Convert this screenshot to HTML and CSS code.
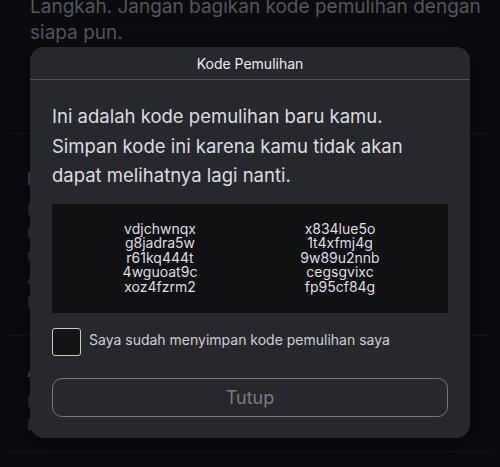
FILE: index.html
```html
<!DOCTYPE html>
<html lang="id">
<head>
<meta charset="utf-8">
<title>Kode Pemulihan</title>
<link rel="stylesheet" href="styles.css">
</head>
<body>
<div class="page">
  <p class="bg-text bg-top">Langkah. Jangan bagikan kode pemulihan dengan<br>siapa pun.</p>
  <div class="bg-divider"></div>
  <section class="bg-section s1">
    <h3 class="bg-head">Pemulihan Akun</h3>
    <p class="bg-small">Hasilkan kode pemulihan baru untuk akun kamu.<br>Kode lama tidak akan berlaku lagi setelah<br>membuat kode baru.<br>Aktifkan verifikasi dua langkah terlebih dahulu.<br>Perbarui kode kapan saja.</p>
  </section>
  <div class="bg-divider"></div>
  <section class="bg-section s2">
    <h3 class="bg-head">Aplikasi</h3>
    <p class="bg-small">Pengaturan aplikasi autentikator<br>Email dan perangkat tepercaya</p>
  </section>
  <div class="bg-divider"></div>
</div>

<div class="modal" role="dialog" aria-labelledby="modal-title">
  <header class="modal-header">
    <h2 id="modal-title" class="modal-title">Kode Pemulihan</h2>
  </header>
  <div class="modal-body">
    <p class="intro">Ini adalah kode pemulihan baru kamu. Simpan kode ini karena kamu tidak akan dapat melihatnya lagi nanti.</p>
    <div class="codes">
      <div class="code-col">
        <span>vdjchwnqx</span>
        <span>g8jadra5w</span>
        <span>r61kq444t</span>
        <span>4wguoat9c</span>
        <span>xoz4fzrm2</span>
      </div>
      <div class="code-col">
        <span>x834lue5o</span>
        <span>1t4xfmj4g</span>
        <span>9w89u2nnb</span>
        <span>cegsgvixc</span>
        <span>fp95cf84g</span>
      </div>
    </div>
    <label class="confirm">
      <span class="checkbox"></span>
      <span class="confirm-text">Saya sudah menyimpan kode pemulihan saya</span>
    </label>
    <button class="close-btn" type="button">Tutup</button>
  </div>
</div>
</body>
</html>
```

FILE: styles.css
```css
* { box-sizing: border-box; }

html, body {
  margin: 0;
  padding: 0;
  background: #0b0b0f;
  width: 500px;
  height: 467px;
  overflow: hidden;
  font-family: "Inter", "Noto Sans", "Liberation Sans", sans-serif;
}

.page {
  padding: 0 10px;
}

.bg-text {
  margin: 0;
  color: #55565c;
  font-size: 19px;
  line-height: 26px;
  white-space: nowrap;
}

.bg-top {
  padding: 0 20px;
  margin-top: -6px;
  height: 139px;
}

.bg-divider {
  height: 1px;
  background: #18181c;
}

.bg-section {
  padding: 0 17px;
}

.s1 { height: 201px; padding-top: 34px; }
.s2 { height: 115px; padding-top: 24px; }

.bg-head {
  margin: 0;
  color: #4a4b50;
  font-size: 18px;
  line-height: 22px;
  font-weight: 700;
}

.bg-small {
  margin: 8px 0 0;
  color: #3c3d42;
  font-size: 15px;
  line-height: 23px;
}

.modal {
  position: absolute;
  left: 30px;
  top: 47px;
  width: 440px;
  background: #27282d;
  border-radius: 14px;
  box-shadow: 0 4px 18px rgba(0, 0, 0, 0.5);
}

.modal-header {
  height: 33px;
  border-bottom: 1px solid #505156;
  display: flex;
  align-items: center;
  justify-content: center;
}

.modal-title {
  margin: 0;
  font-size: 14px;
  font-weight: 400;
  color: #ececef;
}

.modal-body {
  padding: 22px 22px 21px;
  display: flex;
  flex-direction: column;
}

.intro {
  margin: 0;
  max-width: 370px;
  font-size: 18.5px;
  line-height: 29.5px;
  color: #dcdce0;
}

.codes {
  margin-top: 13px;
  background: #111114;
  height: 109px;
  display: grid;
  grid-template-columns: 140px 140px;
  column-gap: 40px;
  justify-content: center;
  align-content: center;
}

.code-col {
  display: flex;
  flex-direction: column;
  align-items: center;
  font-size: 14px;
  line-height: 14.4px;
  color: #dedee2;
}

.confirm {
  margin-top: 15px;
  display: flex;
  align-items: center;
  gap: 8px;
}

.checkbox {
  width: 29px;
  height: 28px;
  border: 1.5px solid #c9c9cd;
  border-radius: 3px;
  background: #151517;
  flex: none;
}

.confirm-text {
  font-size: 14px;
  color: #cfcfd3;
  margin-top: -4px;
}

.close-btn {
  margin-top: 22px;
  height: 39px;
  width: 100%;
  background: transparent;
  border: 1.5px solid #77787d;
  border-radius: 10px;
  color: #7b7c81;
  font-family: inherit;
  font-size: 18px;
}
```
